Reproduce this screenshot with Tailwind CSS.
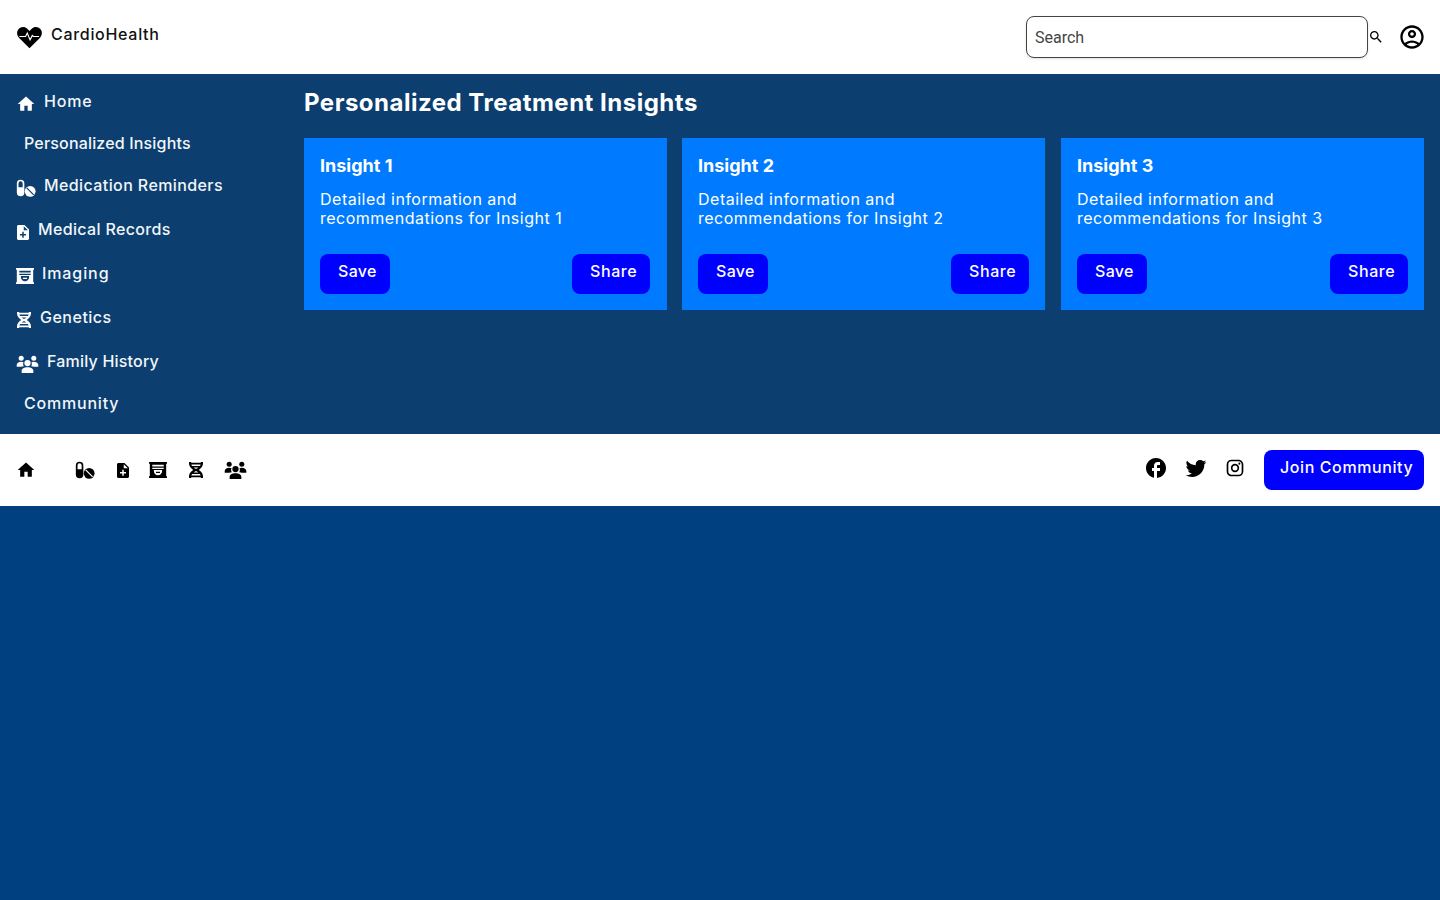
<!DOCTYPE html>
<html lang="en">
<head>
  <meta charset="UTF-8">
  <meta name="viewport" content="width=device-width, initial-scale=1.0">
  <title>CardioHealth</title>
  <script src="https://cdn.jsdelivr.net/npm/@tailwindcss/browser@4"></script>
</head>
<body class="bg-[#004080] min-h-screen font-['Inter',sans-serif]">
  <svg class="hidden">
    <symbol id="i-home" viewBox="0 0 24 24"><path d="M10 20v-6h4v6h5v-8h3L12 3 2 12h3v8z"/></symbol>
    <symbol id="i-meds" viewBox="0 0 24 24"><path fill-rule="evenodd" d="M5.500 2A4.500 4.500 0 0 1 10 6.500v11a4.500 4.500 0 0 1-9 0v-11A4.500 4.500 0 0 1 5.500 2zM5.500 4A2.500 2.500 0 0 0 3 6.500V11h5V6.500A2.500 2.500 0 0 0 5.500 4z"/><circle cx="17" cy="16" r="6.500"/><path d="M12.800 11.800l8.400 8.400" stroke="#fff" stroke-width="1.500" class="[stroke:var(--cut)]"/></symbol>
    <symbol id="i-file" viewBox="4 2 16 20" preserveAspectRatio="none"><path d="M14 2H6c-1.100 0-1.990.900-1.990 2L4 20c0 1.100.890 2 1.990 2H18c1.100 0 2-.900 2-2V8l-6-6zm2 14h-3v3h-2v-3H8v-2h3v-3h2v3h3v2zm-3-7V3.500L18.500 9H13z"/></symbol>
    <symbol id="i-img" viewBox="1 3 22 18" preserveAspectRatio="none"><path fill-rule="evenodd" d="M1 3h22v2h-1v14h1v2H1v-2h1V5H1zM5 6v2h14V6zm0 3.500V11h14V9.500zM7 12v1.500c0 2.500 2 4.500 5 4.500s5-2 5-4.500V12zm2.500 2h5v1.500h-5z"/></symbol>
    <symbol id="i-dna" viewBox="4 2 16 20" preserveAspectRatio="none"><path d="M4 2h2.500v2c0 2.200 1.500 4 3.500 5.500L12 10.700l2-1.200C16 8 17.500 6.200 17.500 4V2H20v2c0 3.300-2 5.800-4.800 8 2.800 2.200 4.800 4.700 4.800 8v2h-2.500v-2c0-2.200-1.500-4-3.500-5.500L12 13.300l-2 1.200C8 16 6.500 17.800 6.500 20v2H4v-2c0-3.300 2-5.800 4.800-8C6 9.800 4 7.300 4 4zM6 3h12v2.200H6zM7 7h10v1.800H7zM7 15.200h10V17H7zM6 18.800h12V21H6z"/></symbol>
    <symbol id="i-group" viewBox="0 0 24 20"><circle cx="5" cy="3.500" r="2.800"/><circle cx="19" cy="3.500" r="2.800"/><circle cx="12" cy="9" r="3.500"/><path d="M0 13v-1.800C0 9.300 2.200 7.500 5 7.500c1 0 1.900.200 2.700.600-.400.700-.600 1.200-.600 1.900 0 1 .300 1.900.900 2.400-1.500.200-2.500.300-3 .600zM24 13v-1.800c0-1.900-2.200-3.700-5-3.700-1 0-1.900.200-2.700.600.400.700.600 1.200.600 1.900 0 1-.300 1.900-.900 2.400 1.500.200 2.500.300 3 .600zM5.500 20v-2.500c0-2.500 2.800-4 6.500-4s6.500 1.500 6.500 4V20z"/></symbol>
  </svg>

  <!-- top bar -->
  <header class="h-[74px] bg-white flex items-center justify-between pl-4 pr-[14px] shadow-sm">
    <div class="flex items-center gap-2 -mt-[6px]">
      <svg class="w-[27px] h-[27px] mt-1" viewBox="0 0 24 24"><path d="M12 22.500 2.600 13C.500 10.800.400 7.500 2.300 5.300 4.300 3 7.900 2.900 10 5l2 2 2-2c2.100-2.100 5.700-2 7.700.300 1.900 2.200 1.800 5.500-.300 7.700z"/><path d="M3 12h5.500l1.500-3 2.500 6 2-4 1 1h5" fill="none" stroke="#fff" stroke-width="1"/></svg>
      <span class="text-[16px] font-medium tracking-[0.7px] text-[#111]">CardioHealth</span>
    </div>
    <div class="flex items-center">
      <input type="text" placeholder="Search" class="w-[342px] h-[42px] -mt-[1px] px-2 pt-[2px] border border-[#444] rounded-lg bg-white text-base font-['Roboto',sans-serif] placeholder:text-[#444] shadow-sm">
      <svg class="w-4 h-4" viewBox="0 0 24 24"><path d="M15.500 14h-.790l-.280-.270C15.410 12.590 16 11.110 16 9.500 16 5.910 13.090 3 9.500 3S3 5.910 3 9.500 5.910 16 9.500 16c1.610 0 3.090-.590 4.230-1.570l.270.280v.790l5 4.990L20.490 19l-4.990-5zm-6 0C7.010 14 5 11.990 5 9.500S7.010 5 9.500 5 14 7.010 14 9.500 11.990 14 9.500 14z"/></svg>
      <svg class="w-7 h-7 ml-[14px]" viewBox="0 0 24 24"><path d="M12 2C6.480 2 2 6.480 2 12s4.480 10 10 10 10-4.480 10-10S17.520 2 12 2zM7.350 18.500C8.660 17.560 10.260 17 12 17s3.340.560 4.650 1.500C15.340 19.440 13.740 20 12 20s-3.340-.560-4.650-1.500zm10.790-1.380C16.450 15.800 14.320 15 12 15s-4.450.800-6.140 2.120C4.700 15.730 4 13.950 4 12c0-4.420 3.580-8 8-8s8 3.580 8 8c0 1.950-.700 3.730-1.860 5.120z"/><path d="M12 6c-1.930 0-3.500 1.570-3.500 3.500S10.070 13 12 13s3.500-1.570 3.500-3.500S13.930 6 12 6zm0 5c-.830 0-1.500-.670-1.500-1.500S11.170 8 12 8s1.500.670 1.500 1.500S12.830 11 12 11z"/></svg>
    </div>
  </header>

  <div class="h-[360px] bg-[#0c3f70] flex text-white">
    <!-- sidebar -->
    <nav class="w-[304px] shrink-0 pl-4 pt-4 text-[16px] font-medium text-[#f2f6fa]">
      <a class="h-[21px] flex items-center gap-2 fill-white tracking-[0.8px]"><svg class="w-5 h-5 mt-[7px]"><use href="#i-home"/></svg>Home</a>
      <a class="mt-[21px] h-[21px] flex items-center pl-2 tracking-[0.17px]">Personalized Insights</a>
      <a class="mt-[21px] h-[21px] flex items-center gap-2 fill-white [--cut:#0c3f70] tracking-[0.4px]"><svg class="w-5 h-5 mt-[7px]"><use href="#i-meds"/></svg>Medication Reminders</a>
      <a class="mt-[23px] h-[21px] flex items-center gap-[9px] pl-[1px] fill-white tracking-[0.35px]"><svg class="w-3 h-[15px] mt-[8px]"><use href="#i-file"/></svg>Medical Records</a>
      <a class="mt-[23px] h-[21px] flex items-center gap-2 fill-white tracking-[0.9px]"><svg class="w-[18px] h-4 mt-[7px]"><use href="#i-img"/></svg>Imaging</a>
      <a class="mt-[23px] h-[21px] flex items-center gap-[9px] pl-[1px] fill-white tracking-[0.5px]"><svg class="w-[14px] h-4 mt-[7px]"><use href="#i-dna"/></svg>Genetics</a>
      <a class="mt-[23px] h-[21px] flex items-center gap-2 fill-white tracking-[0.2px]"><svg class="w-[23px] h-[18px] mt-[7px]"><use href="#i-group"/></svg>Family History</a>
      <a class="mt-[21px] h-[21px] flex items-center pl-2 tracking-[0.8px]">Community</a>
    </nav>

    <!-- main -->
    <main class="flex-1 pr-4 pt-[13px]">
      <h1 class="text-[24px] leading-[32px] font-bold tracking-[0.5px]">Personalized Treatment Insights</h1>
      <div class="flex mt-[19px]">
        <div class="w-[363px] h-[172px] bg-[#007bff] p-4 flex flex-col">
          <h2 class="text-[18px] leading-[24px] font-bold">Insight 1</h2>
          <p class="text-[16px] leading-[19px] mt-3 tracking-[0.5px]">Detailed information and<br>recommendations for Insight 1</p>
          <div class="mt-auto flex justify-between">
            <button class="w-[70px] h-[40px] bg-[#0000ff] rounded-lg pl-[18px] pb-[7px] text-left font-medium tracking-[0.3px]">Save</button>
            <button class="w-[78px] h-[40px] bg-[#0000ff] rounded-lg pl-[18px] pb-[7px] text-left font-medium tracking-[0.6px] mr-[1px]">Share</button>
          </div>
        </div>
        <div class="w-[363px] h-[172px] ml-[15px] bg-[#007bff] p-4 flex flex-col">
          <h2 class="text-[18px] leading-[24px] font-bold">Insight 2</h2>
          <p class="text-[16px] leading-[19px] mt-3 tracking-[0.5px]">Detailed information and<br>recommendations for Insight 2</p>
          <div class="mt-auto flex justify-between">
            <button class="w-[70px] h-[40px] bg-[#0000ff] rounded-lg pl-[18px] pb-[7px] text-left font-medium tracking-[0.3px]">Save</button>
            <button class="w-[78px] h-[40px] bg-[#0000ff] rounded-lg pl-[18px] pb-[7px] text-left font-medium tracking-[0.6px]">Share</button>
          </div>
        </div>
        <div class="w-[363px] h-[172px] ml-4 bg-[#007bff] p-4 flex flex-col">
          <h2 class="text-[18px] leading-[24px] font-bold">Insight 3</h2>
          <p class="text-[16px] leading-[19px] mt-3 tracking-[0.5px]">Detailed information and<br>recommendations for Insight 3</p>
          <div class="mt-auto flex justify-between">
            <button class="w-[70px] h-[40px] bg-[#0000ff] rounded-lg pl-[18px] pb-[7px] text-left font-medium tracking-[0.3px]">Save</button>
            <button class="w-[78px] h-[40px] bg-[#0000ff] rounded-lg pl-[18px] pb-[7px] text-left font-medium tracking-[0.6px]">Share</button>
          </div>
        </div>
      </div>
    </main>
  </div>

  <!-- bottom bar -->
  <footer class="h-[72px] bg-white flex items-center justify-between px-4">
    <div class="flex items-center">
      <svg class="w-5 h-5"><use href="#i-home"/></svg>
      <svg class="w-5 h-5 ml-[39px] [--cut:#fff]"><use href="#i-meds"/></svg>
      <svg class="w-3 h-[15px] ml-[22px]"><use href="#i-file"/></svg>
      <svg class="w-[18px] h-4 ml-[20px]"><use href="#i-img"/></svg>
      <svg class="w-[14px] h-4 ml-[22px]"><use href="#i-dna"/></svg>
      <svg class="w-[23px] h-[18px] ml-[21px]"><use href="#i-group"/></svg>
    </div>
    <div class="flex items-center">
      <svg class="w-6 h-6 -mt-1" viewBox="0 0 24 24"><path d="M22 12c0-5.520-4.480-10-10-10S2 6.480 2 12c0 4.840 3.440 8.870 8 9.800V15H8v-3h2V9.500C10 7.570 11.570 6 13.500 6H16v3h-2c-.550 0-1 .450-1 1v2h3v3h-3v6.950c5.050-.500 9-4.760 9-9.950z"/></svg>
      <svg class="w-6 h-6 -mt-1 ml-4" viewBox="0 0 24 24"><path d="M22.460 6c-.770.350-1.600.580-2.460.690.880-.530 1.560-1.370 1.880-2.380-.830.500-1.750.850-2.720 1.050C18.370 4.500 17.260 4 16 4c-2.350 0-4.270 1.920-4.270 4.290 0 .340.040.670.110.980C8.280 9.090 5.110 7.380 3 4.790c-.370.630-.580 1.370-.580 2.150 0 1.490.750 2.810 1.910 3.560-.710 0-1.370-.200-1.950-.500v.030c0 2.080 1.480 3.820 3.440 4.210a4.220 4.220 0 0 1-1.930.070 4.280 4.280 0 0 0 4 2.980 8.521 8.521 0 0 1-5.330 1.840c-.340 0-.680-.020-1.020-.060C3.440 20.290 5.700 21 8.120 21 16 21 20.330 14.460 20.330 8.790c0-.190 0-.370-.010-.560.840-.600 1.560-1.360 2.140-2.230z"/></svg>
      <svg class="w-5 h-5 -mt-1 ml-[17px]" viewBox="0 0 24 24"><path d="M7.800 2h8.400C19.400 2 22 4.600 22 7.800v8.400a5.800 5.800 0 0 1-5.800 5.800H7.800C4.600 22 2 19.400 2 16.200V7.800A5.800 5.800 0 0 1 7.800 2m-.2 2A3.600 3.600 0 0 0 4 7.600v8.800C4 18.390 5.610 20 7.600 20h8.800a3.600 3.600 0 0 0 3.600-3.600V7.600C20 5.610 18.390 4 16.400 4H7.600m9.650 1.500a1.250 1.250 0 0 1 1.250 1.250A1.250 1.250 0 0 1 17.250 8 1.250 1.250 0 0 1 16 6.750a1.250 1.250 0 0 1 1.250-1.250M12 7a5 5 0 0 1 5 5 5 5 0 0 1-5 5 5 5 0 0 1-5-5 5 5 0 0 1 5-5m0 2a3 3 0 0 0-3 3 3 3 0 0 0 3 3 3 3 0 0 0 3-3 3 3 0 0 0-3-3z"/></svg>
      <button class="w-[160px] h-[40px] ml-[19px] bg-[#0000ff] rounded-lg pl-4 pb-[7px] text-left text-white font-medium tracking-[0.6px]">Join Community</button>
    </div>
  </footer>
</body>
</html>
